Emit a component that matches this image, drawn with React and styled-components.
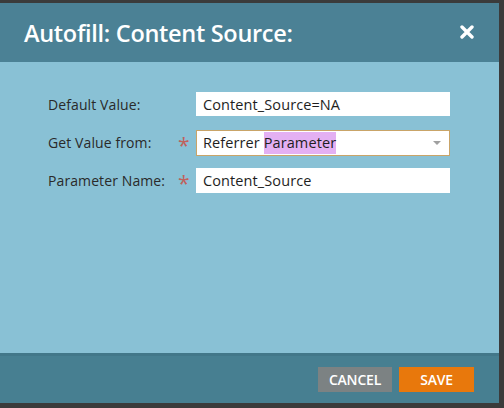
import React from 'react'
import styled, { createGlobalStyle } from 'styled-components'

const GlobalStyle = createGlobalStyle`
  html, body {
    margin: 0;
    padding: 0;
    background: #3b3b3b;
    font-family: "Open Sans", "Liberation Sans", sans-serif;
  }
`

const Page = styled.div`
  width: 504px;
  height: 408px;
  box-sizing: border-box;
  padding: 3px 5px 5px 0;
  background: #3b3b3b;
`

const Dialog = styled.div`
  width: 499px;
  height: 400px;
  display: flex;
  flex-direction: column;
`

const Header = styled.div`
  height: 59px;
  flex: none;
  background: #4b8195;
  display: flex;
  align-items: center;
  justify-content: space-between;
  padding: 0 23px 0 24px;
  box-sizing: border-box;
`

const Title = styled.h2`
  margin: 0;
  color: #fff;
  font-size: 23.5px;
  font-weight: 600;
  letter-spacing: -0.3px;
`

const Close = styled.button`
  border: 0;
  background: none;
  padding: 0;
  width: 16px;
  height: 16px;
  display: flex;
  cursor: pointer;
`

const Body = styled.div`
  flex: 1;
  background: #89c1d5;
  padding: 30px 0 0 48px;
  box-sizing: border-box;
`

const Row = styled.div`
  display: grid;
  grid-template-columns: 128px 20px 254px;
  align-items: center;
  margin-bottom: ${p => p.gap}px;
`

const Label = styled.label`
  font-size: 14px;
  letter-spacing: 0.1px;
  color: #2a2a2a;
`

const Star = styled.span`
  color: #c0615c;
  font-size: 21px;
  line-height: 1;
  padding-top: 6px;
  padding-left: 2px;
`

const Field = styled.div`
  height: ${p => p.h}px;
  box-sizing: border-box;
  background: #fff;
  border: 1px solid ${p => (p.focused ? '#c9a468' : '#fff')};
  display: flex;
  align-items: center;
  padding: 0 8px 0 6px;
  font-size: 14.5px;
  letter-spacing: 0.1px;
  color: #1e1e1e;
  position: relative;
`

const Mark = styled.span`
  background: #e4b0f3;
  padding: 1px 0 2px;
`

const Caret = styled.span`
  margin-left: auto;
  width: 0;
  height: 0;
  border-left: 4px solid transparent;
  border-right: 4px solid transparent;
  border-top: 4px solid #a0a0a0;
`

const Footer = styled.div`
  height: 50px;
  flex: none;
  background: #477f91;
  border-top: 3px solid #427789;
  box-sizing: border-box;
  display: flex;
  justify-content: flex-end;
  align-items: center;
  gap: 7px;
  padding: 0 25px 1px 0;
`

const Button = styled.button`
  height: 25px;
  width: ${p => p.w}px;
  border: 0;
  background: ${p => (p.primary ? '#e8780c' : '#7c8283')};
  color: #fff;
  font-family: "Open Sans", "Liberation Sans", sans-serif;
  font-size: 14px;
  font-weight: 600;
  letter-spacing: -0.2px;
  padding: 0;
`

export default function App() {
  return (
    <>
      <GlobalStyle />
      <Page>
        <Dialog>
          <Header>
            <Title>Autofill: Content Source:</Title>
            <Close aria-label="close">
              <svg width="14" height="14" viewBox="0 0 14 14">
                <path d="M2 2L12 12M12 2L2 12" stroke="#fff" strokeWidth="3.4" strokeLinecap="round" />
              </svg>
            </Close>
          </Header>
          <Body>
            <Row gap={13}>
              <Label>Default Value:</Label>
              <span />
              <Field h={24}>Content_Source=NA</Field>
            </Row>
            <Row gap={11}>
              <Label>Get Value from:</Label>
              <Star>*</Star>
              <Field h={26} focused>
                Referrer&nbsp;<Mark>Parameter</Mark>
                <Caret />
              </Field>
            </Row>
            <Row gap={0}>
              <Label>Parameter Name:</Label>
              <Star>*</Star>
              <Field h={25}>Content_Source</Field>
            </Row>
          </Body>
          <Footer>
            <Button w={74}>CANCEL</Button>
            <Button w={75} primary>SAVE</Button>
          </Footer>
        </Dialog>
      </Page>
    </>
  )
}
